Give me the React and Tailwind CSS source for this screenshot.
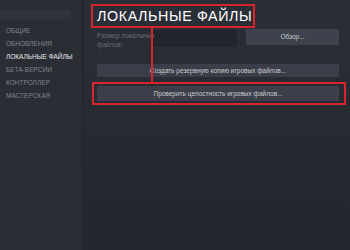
export default function App() {
  const items = ["ОБЩИЕ", "ОБНОВЛЕНИЯ", "ЛОКАЛЬНЫЕ ФАЙЛЫ", "БЕТА-ВЕРСИИ", "КОНТРОЛЛЕР", "МАСТЕРСКАЯ"];
  return (
    <div
      className="flex w-[350px] h-[250px] overflow-hidden bg-[#23262d]"
      style={{ fontFamily: '"Liberation Sans", Arial, sans-serif' }}
    >
      <div className="w-[84px] shrink-0 bg-[#2a2d34] border-r-[3px] border-[#25282e] pt-[10px]">
        <div className="w-[71px] h-[10px] bg-[#30333a]" />
        <div className="flex flex-col pl-[6px] pt-[7px] gap-[5px]">
          {items.map((t, i) => (
            <div
              key={t}
              className={
                "text-[6.5px] leading-[8px] whitespace-nowrap " +
                (i === 2 ? "text-[#e6e8ea]" : "text-[#7e848c]")
              }
            >
              {t}
            </div>
          ))}
        </div>
      </div>
      <div className="flex-1 bg-gradient-to-b from-[#2a2e36] to-[#23262c] pl-[7px] pr-[8px] pt-[4px] relative">
        <div className="w-[164px] h-[24px] border-2 border-[#d8242d] flex items-center pl-[4px]">
          <span className="text-white text-[14.3px] leading-none tracking-[0.6px] whitespace-nowrap">
            ЛОКАЛЬНЫЕ ФАЙЛЫ
          </span>
        </div>
        <div className="flex items-start mt-[1px] pl-[6px] h-[19px]">
          <div className="w-[55px] relative z-10 text-[#666c75] text-[6.6px] leading-[9px] pt-[2px] whitespace-nowrap">
            Размер локальных
            <br />
            файлов:
          </div>
          <div className="w-[85px] h-[17px] bg-[#21242a] mt-[1px]" />
          <div className="ml-[9px] w-[93px] h-[16px] bg-[#3d424c] flex items-center justify-center text-[#c9ccd0] text-[6.5px]">
            Обзор...
          </div>
        </div>
        <div className="ml-[6px] mt-[16px] w-[242px] h-[13px] bg-[#393e48] flex items-center justify-center text-[#c9ccd0] text-[6.5px]">
          Создать резервную копию игровых файлов...
        </div>
        <div className="mt-[5px] ml-[1px] w-[254px] h-[23px] border-2 border-[#d8242d] pt-[2px] pl-[3px]">
          <div className="w-[242px] h-[15px] bg-[#3a3f49] flex items-center justify-center text-[#c9ccd0] text-[6.5px]">
            Проверить целостность игровых файлов...
          </div>
        </div>
        <div className="absolute z-20 left-[67px] top-[28px] w-[2px] h-[54px] bg-[#d8242d]" />
      </div>
    </div>
  );
}
